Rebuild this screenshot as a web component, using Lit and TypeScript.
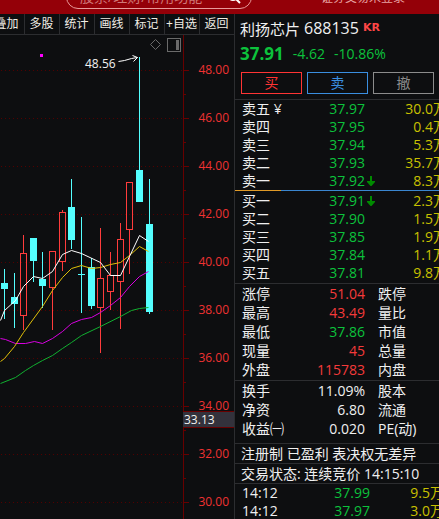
import { LitElement, html, svg, css } from "lit";
import { customElement } from "lit/decorators.js";

const font = css`"Open Sans", "Noto Sans CJK SC", sans-serif`;

type Tone = "up" | "down" | "flat";
interface Candle { x: number; top: number; bottom: number; high: number; low: number; up: boolean; }

const c = (x: number, top: number, bottom: number, high: number, low: number, up: boolean): Candle =>
  ({ x, top, bottom, high, low, up });

const CANDLES: Candle[] = [
  c(1, 283, 289, 269, 319, false),
  c(11, 297, 304, 273, 328, false),
  c(20, 253, 316, 235, 330, true),
  c(30, 238, 261, 238, 282, false),
  c(39, 279, 286, 252, 308, false),
  c(49, 251, 288, 251, 330, true),
  c(59, 212, 262, 210, 271, true),
  c(68, 207, 240, 179, 249, false),
  c(78, 274, 275, 217, 313, false),
  c(88, 267, 306, 258, 309, false),
  c(97, 278, 308, 228, 353, true),
  c(107, 275, 292, 252, 310, true),
  c(117, 239, 282, 223, 329, true),
  c(126, 182, 230, 182, 274, true),
  c(136, 170, 202, 57, 202, false),
  c(146, 224, 312, 179, 314, false),
];

const AVERAGES = [
  { cls: "ma-green", points: "0,383 15,377 25,370 33,365 42,360 52,355 62,348 71,342 81,335 100,326 120,316 131,310 139,308 148,307" },
  { cls: "ma-magenta", points: "0,338 5,339 15,343 25,343 34,341 42,343 52,338 62,331 71,323 81,319 91,317 100,312 110,305 120,297 129,286 139,276 148,271" },
  { cls: "ma-yellow", points: "0,361 4,358 14,346 23,332 42,306 52,290 62,277 71,268 81,265 91,268 100,267 110,264 120,262 129,255 139,246 148,251" },
  { cls: "ma-white", points: "0,320 4,310 15,300 23,286 33,276 42,278 52,271 62,254 71,250 81,253 100,262 110,275 120,275 129,256 139,235 148,241" },
];

const PRICES = ["48.00", "46.00", "44.00", "42.00", "40.00", "38.00", "36.00", "34.00", "32.00", "30.00"];

@customElement("price-chart")
export class PriceChart extends LitElement {
  static styles = css`
    :host { display: grid; grid-template-columns: 190px minmax(0, 1fr); position: relative; font-family: ${font}; overflow: hidden; }
    .plot { display: block; width: 190px; height: 484px; }
    .grid { stroke: #520000; stroke-dasharray: 1 3; }
    .axis-line { stroke: #680000; fill: none; }
    .down { fill: #54ffff; }
    .body-up { fill: none; stroke: #ff3c3c; }
    .up { fill: #ff3c3c; }
    .ma { fill: none; stroke-width: 1; }
    .ma-white { stroke: #ffffff; }
    .ma-yellow { stroke: #e0c008; }
    .ma-magenta { stroke: #d800e0; }
    .ma-green { stroke: #10b030; }
    .mark { fill: #ff00ff; }
    .peak { fill: #f2f2f2; font-size: 12px; }
    .arrow { stroke: #ffffff; fill: none; }
    .tool { stroke: #6a6a6a; fill: none; }
    .tool-fill { fill: #6a6a6a; }
    .labels { list-style: none; margin: 0; padding: 11px 5px 0 0; font-size: 12px; line-height: 48px; text-align: right; color: #f03232; }
    .tag { position: absolute; left: 183px; right: 0; top: 376px; height: 17px; box-sizing: border-box; border: 1px solid #680000; border-width: 1px 0; background: #33323c; color: #f2f2f2; font-size: 12px; line-height: 15px; padding-left: 1px; }
  `;

  private candle(k: Candle) {
    const mid = k.x + 3;
    const cls = k.up ? "up" : "down";
    return svg`
      <rect class=${cls} x=${mid} y=${k.high} width="1" height=${k.top - k.high}></rect>
      <rect class=${cls} x=${mid} y=${k.bottom} width="1" height=${k.low - k.bottom}></rect>
      ${k.up
        ? svg`<rect class="body-up" x=${k.x + 0.5} y=${k.top + 0.5} width="6" height=${k.bottom - k.top - 1}></rect>`
        : svg`<rect class="down" x=${k.x} y=${k.top} width="7" height=${k.bottom - k.top}></rect>`}`;
  }

  render() {
    return html`
      <svg class="plot" viewBox="0 35 190 484" role="img" aria-label="日K线">
        <g shape-rendering="crispEdges">
          ${PRICES.map((_, i) => svg`
            <path class="grid" d="M1 ${70.5 + i * 48}H183"></path>
            <path class="axis-line" d="M184 ${70.5 + i * 48}h5M184 ${94.5 + i * 48}h2"></path>`)}
          <path class="axis-line" d="M183.5 35V519"></path>
          ${CANDLES.map((k) => this.candle(k))}
          <rect class="mark" x="40" y="54" width="3" height="3"></rect>
          <rect class="tool" x="167.5" y="38.5" width="13" height="13"></rect>
          <rect class="tool-fill" x="176" y="40" width="3" height="10"></rect>
        </g>
        <g transform="translate(.5 .5)">
          ${AVERAGES.map((m) => svg`<polyline class="ma ${m.cls}" points=${m.points}></polyline>`)}
          <path class="tool" d="M155 39l5 5-5 5-5-5z"></path>
          <path class="arrow" d="M118 61l6-1 7-2 6-1M132 55l5 2-4 4"></path>
        </g>
        <text class="peak" x="85" y="68">48.56</text>
      </svg>
      <ul class="labels">${PRICES.map((p) => html`<li>${p}</li>`)}</ul>
      <div class="tag">33.13</div>`;
  }
}

const ASKS = [
  ["卖五 ¥", "37.97", "30.0万"], ["卖四", "37.95", "0.4万"], ["卖三", "37.94", "5.3万"],
  ["卖二", "37.93", "35.7万"], ["卖一", "37.92", "8.3万"],
];
const BIDS = [
  ["买一", "37.91", "2.3万"], ["买二", "37.90", "1.5万"], ["买三", "37.85", "1.9万"],
  ["买四", "37.84", "1.1万"], ["买五", "37.81", "9.8万"],
];
const STATS: [string, string, Tone, string][] = [
  ["涨停", "51.04", "up", "跌停"], ["最高", "43.49", "up", "量比"], ["最低", "37.86", "down", "市值"],
  ["现量", "45", "up", "总量"], ["外盘", "115783", "up", "内盘"],
];
const FUNDAMENTALS: [string, string, Tone, string][] = [
  ["换手", "11.09%", "flat", "股本"], ["净资", "6.80", "flat", "流通"], ["收益㈠", "0.020", "flat", "PE(动)"],
];
const TRADES = [["14:12", "37.99", "9.5万"], ["14:12", "37.97", "3.0万"]];

@customElement("quote-panel")
export class QuotePanel extends LitElement {
  static styles = css`
    :host { display: block; overflow: hidden; font-family: ${font}; font-size: 14px; color: #f0f0f0; white-space: nowrap; }
    .name { display: flex; align-items: center; height: 28px; padding-left: 5px; gap: 4px; font-size: 15px; font-weight: 400; margin: 0; }
    .code { font-size: 16px; }
    .flag { font: bold 11px "DejaVu Sans", sans-serif; color: #ff4646; padding-bottom: 2px; }
    .price { display: flex; align-items: center; gap: 9px; height: 22px; padding-left: 5px; color: #0cc23c; }
    .last { font-size: 17px; font-weight: 700; }
    .actions { display: grid; grid-template-columns: repeat(3, 1fr); gap: 5px; padding: 8px 5px 5px 6px; }
    .action { height: 22px; padding: 0; border: 1px solid; background: none; font: 14px/20px ${font}; }
    .buy { color: #ff3434; }
    .sell { color: #3a8ee0; }
    .cancel { color: #8c8c8c; }
    .section { border-top: 1px solid #2c2d30; }
    .stats { padding-bottom: 1px; }
    .fundamentals { padding-bottom: 5px; }
    .bids { padding: 1px 0; }
    .divider { display: flex; height: 1px; background: #3a86d0; }
    .share { width: 46px; background: #e09a28; }
    table { border-collapse: collapse; table-layout: fixed; width: 212px; }
    th, td { padding: 0; height: 18px; line-height: 18px; font-weight: 400; }
    .tall th, .tall td { height: 19px; line-height: 19px; }
    th { text-align: left; padding-left: 7px; }
    .num { text-align: right; }
    .side { padding-left: 14px; }
    .c-label { width: 70px; }
    .c-price { width: 60px; }
    .c-arrow { width: 13px; }
    .c-time { width: 75px; }
    .trades { width: 209px; }
    .up { color: #f43a3a; }
    .down { color: #0cc23c; }
    .vol { color: #c8c000; }
    .arrow { display: block; margin-left: 2px; fill: #008a00; }
    .tall .side { padding-left: 13px; }
    .note { margin: 0; padding-left: 6px; height: 19px; line-height: 19px; }
  `;

  private depth(rows: string[][], marked: string) {
    return html`<table>
      <colgroup><col class="c-label"><col class="c-price"><col class="c-arrow"><col></colgroup>
      <tbody>${rows.map(([label, price, vol]) => html`<tr>
        <th scope="row">${label}</th><td class="num down">${price}</td>
        <td>${label === marked ? html`<svg class="arrow" width="8" height="10" viewBox="0 0 8 10"><path d="M3 0h2v5h3v1L4.500 10h-1L0 6V5h3z"></path></svg>` : ""}</td>
        <td class="num vol">${vol}</td></tr>`)}</tbody></table>`;
  }

  private pairs(rows: [string, string, Tone, string][]) {
    return html`<table class="tall">
      <colgroup><col class="c-label"><col class="c-price"><col></colgroup>
      <tbody>${rows.map(([label, value, tone, side]) => html`<tr>
        <th scope="row">${label}</th><td class="num ${tone}">${value}</td>
        <th scope="row" class="side">${side}</th></tr>`)}</tbody></table>`;
  }

  render() {
    return html`
      <h1 class="name">利扬芯片 <span class="code">688135</span><span class="flag">KR</span></h1>
      <div class="price"><span class="last">37.91</span><span>-4.62</span><span>-10.86%</span></div>
      <div class="actions">
        <button class="action buy">买</button><button class="action sell">卖</button><button class="action cancel">撤</button>
      </div>
      <div class="section">${this.depth(ASKS, "卖一")}</div>
      <div class="divider"><span class="share"></span></div>
      <div class="bids">${this.depth(BIDS, "买一")}</div>
      <div class="section stats">${this.pairs(STATS)}</div>
      <div class="section fundamentals">${this.pairs(FUNDAMENTALS)}</div>
      <div class="section"><p class="note">注册制 已盈利 表决权无差异</p></div>
      <div class="section"><p class="note">交易状态: 连续竞价 14:15:10</p></div>
      <div class="section"><table class="trades">
        <colgroup><col class="c-time"><col class="c-price"><col></colgroup>
        <tbody>${TRADES.map(([time, price, vol]) => html`<tr>
          <th scope="row">${time}</th><td class="num down">${price}</td><td class="num vol">${vol}</td></tr>`)}</tbody>
      </table></div>`;
  }
}

const TABS = ["叠加", "多股", "统计", "画线", "标记", "+自选", "返回"];

@customElement("app-root")
export class AppRoot extends LitElement {
  static styles = css`
    :host { display: flex; flex-direction: column; height: 100vh; overflow: hidden; background: #0d0e10; font-family: ${font}; }
    .top { flex: none; display: flex; align-items: flex-end; height: 9px; padding: 0 0 5px 66px; background: #940008; overflow: hidden; }
    .search { display: flex; align-items: center; flex: none; box-sizing: border-box; width: 186px; height: 24px; padding: 0 10px 0 13px; border: 1px solid #e89a9a; border-radius: 12px; }
    .query { flex: 1; min-width: 0; padding: 0; border: 0; outline: 0; background: none; color: #ffffff; font: 14px/20px ${font}; }
    .query::placeholder { color: #d07878; opacity: 1; }
    .lens { flex: none; fill: none; stroke: #ffffff; stroke-width: 2; }
    .login { flex: none; margin-left: 69px; font-size: 12px; line-height: 22px; color: #e8a0a0; text-decoration: none; }
    .main { flex: 1; min-height: 0; display: grid; grid-template-columns: 234px minmax(0, 1fr); }
    .left { min-width: 0; overflow: hidden; }
    .tabs { display: flex; justify-content: flex-end; height: 20px; border-bottom: 1px solid #2c2d30; }
    .tab { flex: none; box-sizing: border-box; width: 35px; padding: 0 1px 0 0; border: 0; border-left: 1px solid #2c2d30; background: none; color: #f0ece4; font: 12px/20px ${font}; white-space: nowrap; }
    .quote { border-left: 1px solid #2c2d30; }
  `;

  render() {
    return html`
      <header class="top">
        <label class="search">
          <input class="query" type="text" aria-label="搜索" placeholder="股票/理财/常用功能">
          <svg class="lens" width="14" height="16" viewBox="0 0 14 16"><circle cx="6" cy="6" r="5"></circle><path d="M9 10l4 4"></path></svg>
        </label>
        <a class="login" href="#">证券交易未登录</a>
      </header>
      <main class="main">
        <div class="left">
          <nav class="tabs">${TABS.map((t) => html`<button class="tab">${t}</button>`)}</nav>
          <price-chart></price-chart>
        </div>
        <quote-panel class="quote"></quote-panel>
      </main>`;
  }
}
